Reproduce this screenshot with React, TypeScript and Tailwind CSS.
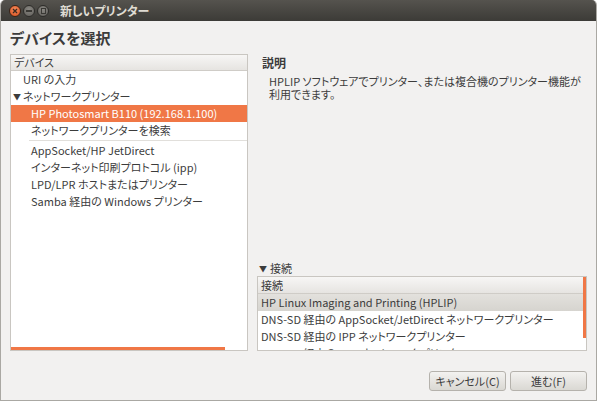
import React from 'react';

const devices = [
  { label: 'URI の入力', indent: 'pl-[12px]' },
  { label: 'ネットワークプリンター', indent: 'pl-[12px]', expander: true },
  { label: 'HP Photosmart B110 (192.168.1.100)', indent: 'pl-[20px]', selected: true },
  { label: 'ネットワークプリンターを検索', indent: 'pl-[20px]' },
  { sep: true },
  { label: 'AppSocket/HP JetDirect', indent: 'pl-[20px]' },
  { label: 'インターネット印刷プロトコル (ipp)', indent: 'pl-[20px]' },
  { label: 'LPD/LPR ホストまたはプリンター', indent: 'pl-[20px]' },
  { label: 'Samba 経由の Windows プリンター', indent: 'pl-[20px]' },
];

const connections = [
  { label: 'HP Linux Imaging and Printing (HPLIP)', selected: true },
  { label: 'DNS-SD 経由の AppSocket/JetDirect ネットワークプリンター' },
  { label: 'DNS-SD 経由の IPP ネットワークプリンター' },
  { label: 'DNS-SD 経由の LPD ネットワークプリンター' },
];

const WinButton: React.FC<{ kind: 'close' | 'min' | 'max' }> = ({ kind }) => {
  if (kind === 'close') {
    return (
      <div className="w-[12px] h-[12px] rounded-full bg-[radial-gradient(circle_at_50%_35%,#f58a5b,#d8501e)] border border-[#3a2418] flex items-center justify-center">
        <svg width="6" height="6" viewBox="0 0 6 6">
          <path d="M1 1L5 5M5 1L1 5" stroke="#3c2a20" strokeWidth="1.3" />
        </svg>
      </div>
    );
  }
  return (
    <div className="w-[12px] h-[12px] rounded-full bg-[radial-gradient(circle_at_50%_35%,#8a8883,#5e5c58)] border border-[#2e2d2a] flex items-center justify-center">
      {kind === 'min' ? (
        <div className="w-[6px] h-[2px] bg-[#3a3935]" />
      ) : (
        <div className="w-[5px] h-[6px] border border-[#3a3935]" />
      )}
    </div>
  );
};

export default function App() {
  return (
    <div className="w-[597px] h-[401px] flex flex-col bg-[#f2f1f0] text-[#3c3c3c] text-[11px] font-['Noto_Sans_CJK_JP',sans-serif] [font-feature-settings:'palt'] overflow-hidden rounded-t-[5px] border-x border-b border-[#aaa8a3]">
      {/* TITLE BAR */}
      <div className="h-[21px] shrink-0 flex items-center bg-gradient-to-b from-[#55534e] to-[#3c3b37] pl-[8px]">
        <div className="flex gap-[2px]">
          <WinButton kind="close" />
          <WinButton kind="min" />
          <WinButton kind="max" />
        </div>
        <span className="ml-[11px] text-[12px] font-bold text-[#dfdbd2] leading-none">新しいプリンター</span>
      </div>

      <div className="flex-1 flex flex-col px-[9px]">
        <h1 className="mt-[8px] h-[25px] text-[15px] font-bold leading-[18px]">デバイスを選択</h1>

        <div className="flex gap-[9px] h-[297px]">
          {/* DEVICE TREE */}
          <div className="w-[238px] flex flex-col bg-white border border-[#c9c6c1] relative">
            <div className="h-[16px] flex items-center px-[3px] bg-gradient-to-b from-[#f7f6f5] to-[#e6e4e1] border-b border-[#cfccc7] leading-none">デバイス</div>
            {devices.map((d, i) =>
              d.sep ? (
                <div key={i} className="h-[3px] flex items-center pl-[18px]">
                  <div className="flex-1 h-px bg-[#e1dfdb]" />
                </div>
              ) : (
                <div
                  key={i}
                  className={`h-[17px] flex items-center ${d.indent} leading-none ${d.selected ? 'bg-[#f07746] text-white' : ''}`}
                >
                  {d.expander && <span className="absolute left-[2px] text-[8px]">▼</span>}
                  {d.label}
                </div>
              )
            )}
            <div className="absolute left-0 bottom-0 w-[214px] h-[3px] bg-[#f07746]" />
          </div>

          {/* RIGHT COLUMN */}
          <div className="flex-1 flex flex-col">
            <div className="mt-[2px] pl-[5px] font-bold text-[12px] leading-[14px]">説明</div>
            <p className="mt-[5px] pl-[12px] pr-[4px] leading-[13px]">
              HPLIP ソフトウェアでプリンター、または複合機のプリンター機能が利用できます。
            </p>
            <div className="flex-1" />
            <div className="pl-[2px] h-[15px] flex items-center gap-[3px] leading-none">
              <span className="text-[8px]">▼</span>
              <span>接続</span>
            </div>
            <div className="h-[75px] flex flex-col bg-white border border-[#c9c6c1] relative overflow-hidden">
              <div className="h-[17px] shrink-0 flex items-center px-[3px] bg-gradient-to-b from-[#f7f6f5] to-[#e6e4e1] border-b border-[#cfccc7] leading-none">接続</div>
              {connections.map((c, i) => (
                <div
                  key={i}
                  className={`h-[17px] shrink-0 flex items-center px-[3px] leading-none ${c.selected ? 'bg-gradient-to-b from-[#e3e1dd] to-[#d6d4cf]' : ''}`}
                >
                  {c.label}
                </div>
              ))}
              <div className="absolute right-0 top-0 w-[3px] h-[61px] bg-[#f07746]" />
            </div>
          </div>
        </div>

        {/* BUTTONS */}
        <div className="mt-[20px] flex justify-end gap-[4px]">
          <button className="w-[77px] h-[20px] rounded-[3px] border border-[#b5b2ac] bg-gradient-to-b from-[#f3f2f0] to-[#dad8d3] text-[11px] leading-none">キャンセル(C)</button>
          <button className="w-[77px] h-[20px] rounded-[3px] border border-[#b5b2ac] bg-gradient-to-b from-[#f3f2f0] to-[#dad8d3] text-[11px] leading-none">進む(F)</button>
        </div>
      </div>
    </div>
  );
}
